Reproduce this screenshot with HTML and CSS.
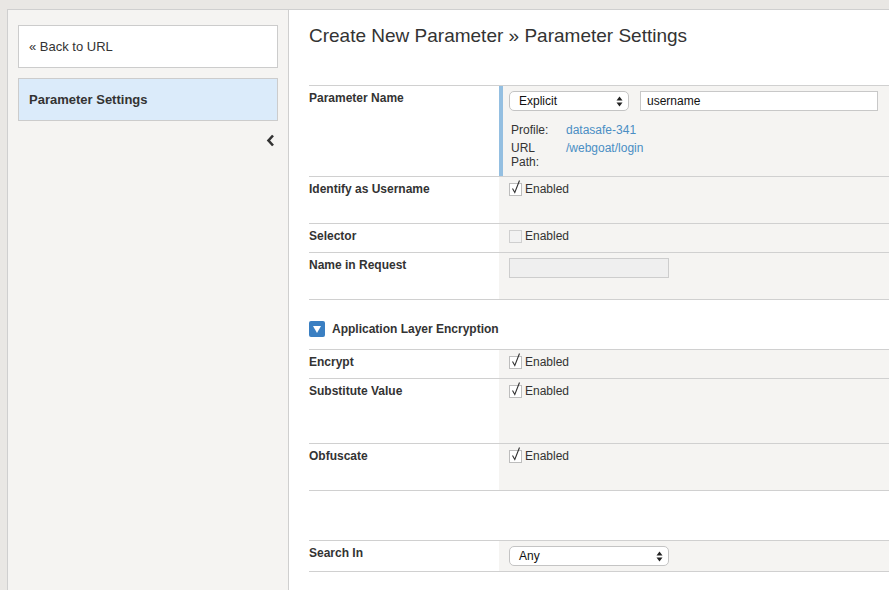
FILE: index.html
```html
<!DOCTYPE html>
<html>
<head>
<meta charset="utf-8">
<title>Create New Parameter</title>
<link rel="stylesheet" href="styles.css">
</head>
<body>
<div class="page">
  <aside class="sidebar">
    <a class="side-item" href="#">« Back to URL</a>
    <div class="side-item active">Parameter Settings</div>
    <div class="collapse">
      <svg width="9" height="13" viewBox="0 0 9 13"><path d="M7 1.5 L2.5 6.5 L7 11.5" fill="none" stroke="#333" stroke-width="2.6"/></svg>
    </div>
  </aside>
  <main class="main">
    <h1 class="title">Create New Parameter » Parameter Settings</h1>
    <div class="form">
      <div class="row r91">
        <div class="label">Parameter Name</div>
        <div class="value accent">
          <div class="controls">
            <div class="select w120"><span>Explicit</span><svg class="arrows" width="7" height="11" viewBox="0 0 7 11"><path d="M3.5 0.5 L6.5 4.5 L0.5 4.5 Z M0.5 6.5 L6.5 6.5 L3.5 10.5 Z" fill="#222"/></svg></div>
            <div class="input w238">username</div>
          </div>
          <div class="meta">
            <div class="meta-label">Profile:</div><a class="meta-link" href="#">datasafe-341</a>
            <div class="meta-label">URL Path:</div><a class="meta-link" href="#">/webgoat/login</a>
          </div>
        </div>
      </div>
      <div class="row r47">
        <div class="label">Identify as Username</div>
        <div class="value"><span class="check on"><span class="box"></span><svg class="tick" width="10" height="14" viewBox="0 0 10 14"><path d="M1.5 8.5 L3.8 12.5 L8.5 0.5" fill="none" stroke="#333" stroke-width="1.1"/></svg></span>Enabled</div>
      </div>
      <div class="row r29">
        <div class="label">Selector</div>
        <div class="value"><span class="check"><span class="box off"></span></span>Enabled</div>
      </div>
      <div class="row r47">
        <div class="label">Name in Request</div>
        <div class="value"><div class="input disabled w160"></div></div>
      </div>
      <div class="section r50">
        <span class="toggle"><svg width="8" height="7" viewBox="0 0 8 7"><path d="M0 0 L8 0 L4 7 Z" fill="#fff"/></svg></span>
        <span class="section-title">Application Layer Encryption</span>
      </div>
      <div class="row r29">
        <div class="label">Encrypt</div>
        <div class="value"><span class="check on"><span class="box"></span><svg class="tick" width="10" height="14" viewBox="0 0 10 14"><path d="M1.5 8.5 L3.8 12.5 L8.5 0.5" fill="none" stroke="#333" stroke-width="1.1"/></svg></span>Enabled</div>
      </div>
      <div class="row r65">
        <div class="label">Substitute Value</div>
        <div class="value"><span class="check on"><span class="box"></span><svg class="tick" width="10" height="14" viewBox="0 0 10 14"><path d="M1.5 8.5 L3.8 12.5 L8.5 0.5" fill="none" stroke="#333" stroke-width="1.1"/></svg></span>Enabled</div>
      </div>
      <div class="row r47">
        <div class="label">Obfuscate</div>
        <div class="value"><span class="check on"><span class="box"></span><svg class="tick" width="10" height="14" viewBox="0 0 10 14"><path d="M1.5 8.5 L3.8 12.5 L8.5 0.5" fill="none" stroke="#333" stroke-width="1.1"/></svg></span>Enabled</div>
      </div>
      <div class="spacer r50"></div>
      <div class="row r31 last">
        <div class="label">Search In</div>
        <div class="value"><div class="select w160"><span>Any</span><svg class="arrows" width="7" height="11" viewBox="0 0 7 11"><path d="M3.5 0.5 L6.5 4.5 L0.5 4.5 Z M0.5 6.5 L6.5 6.5 L3.5 10.5 Z" fill="#222"/></svg></div></div>
      </div>
    </div>
  </main>
</div>
</body>
</html>
```
FILE: styles.css
```css
html, body {
  margin: 0;
  padding: 0;
}
body {
  background: #e9e7e4;
  font-family: "Liberation Sans", Arial, sans-serif;
  color: #333;
  overflow: hidden;
}
.page {
  display: flex;
  height: 590px;
  box-sizing: border-box;
  padding: 9px 0 0 7px;
  overflow: hidden;
}
.sidebar {
  width: 282px;
  flex: none;
  box-sizing: border-box;
  background: #f5f4f2;
  border: 1px solid #cfcfcf;
  border-bottom: none;
  padding: 15px 10px 0 10px;
  display: flex;
  flex-direction: column;
  gap: 10px;
}
.side-item {
  height: 43px;
  box-sizing: border-box;
  border: 1px solid #cccccc;
  background: #fff;
  padding: 0 10px;
  display: flex;
  align-items: center;
  font-size: 13px;
  color: #333;
  text-decoration: none;
}
.side-item.active {
  background: #dbebfa;
  font-weight: bold;
}
.collapse {
  display: flex;
  justify-content: flex-end;
  padding: 3px 3px 0 0;
}
.main {
  flex: 1;
  min-width: 0;
  background: #fff;
  border-top: 1px solid #cfcfcf;
  padding: 14px 0 0 20px;
  overflow: hidden;
}
.title {
  margin: 0;
  font-size: 19px;
  font-weight: normal;
  line-height: 24px;
  color: #333;
  white-space: nowrap;
}
.form {
  margin-top: 37px;
  width: 620px;
  font-size: 12px;
}
.row, .section, .spacer {
  box-sizing: border-box;
  border-top: 1px solid #d0d0d0;
}
.row {
  display: grid;
  grid-template-columns: 190px 1fr;
}
.row.last {
  border-bottom: 1px solid #d0d0d0;
}
.r91 { height: 91px; }
.r65 { height: 65px; }
.r50 { height: 50px; }
.r47 { height: 47px; }
.r31 { height: 31px; }
.r31.last { height: 32px; }
.r29 { height: 29px; }
.label {
  font-weight: bold;
  line-height: 14px;
  padding-top: 5px;
  color: #333;
}
.value {
  background: #f5f4f2;
  padding: 5px 10px 0 10px;
  line-height: 14px;
  color: #333;
  display: flex;
  align-items: flex-start;
}
.value.accent {
  border-left: 4px solid #94bfe1;
  padding-left: 6px;
  flex-direction: column;
}
.controls {
  display: flex;
  gap: 11px;
}
.select {
  height: 20px;
  box-sizing: border-box;
  border: 1px solid #c4c4c4;
  border-radius: 5px;
  background: #fff;
  display: flex;
  align-items: center;
  justify-content: space-between;
  padding: 0 5px 0 9px;
  font-size: 12px;
  color: #111;
}
.input {
  height: 20px;
  box-sizing: border-box;
  border: 1px solid #c8c8c8;
  background: #fff;
  padding: 0 6px;
  display: flex;
  align-items: center;
  font-size: 12px;
  color: #111;
}
.input.disabled {
  background: #efefef;
  border-color: #cdcdcd;
}
.w120 { width: 120px; }
.w160 { width: 160px; }
.w238 { width: 238px; }
.meta {
  margin-top: 12px;
  padding-left: 2px;
  display: grid;
  grid-template-columns: 55px 1fr;
  row-gap: 4px;
  line-height: 14px;
}
.meta-label {
  padding-right: 10px;
  color: #333;
}
.meta-link {
  color: #4a8ec4;
  text-decoration: none;
}
.check {
  position: relative;
  display: inline-block;
  width: 13px;
  height: 13px;
  margin: 1px 3px 0 0;
  flex: none;
}
.box {
  display: block;
  width: 13px;
  height: 13px;
  box-sizing: border-box;
  border: 1px solid #bdbdbd;
  background: #fff;
}
.box.off {
  background: #f2f2f2;
  border-color: #cfcfcf;
}
.tick {
  position: absolute;
  left: 2px;
  top: -3px;
}
.section {
  display: flex;
  align-items: flex-start;
  padding-top: 21px;
  gap: 7px;
}
.toggle {
  width: 16px;
  height: 16px;
  background: #3a7fc2;
  border-radius: 2px;
  display: flex;
  align-items: center;
  justify-content: center;
  flex: none;
}
.section-title {
  font-weight: bold;
  font-size: 12px;
  line-height: 16px;
  color: #333;
}
```
